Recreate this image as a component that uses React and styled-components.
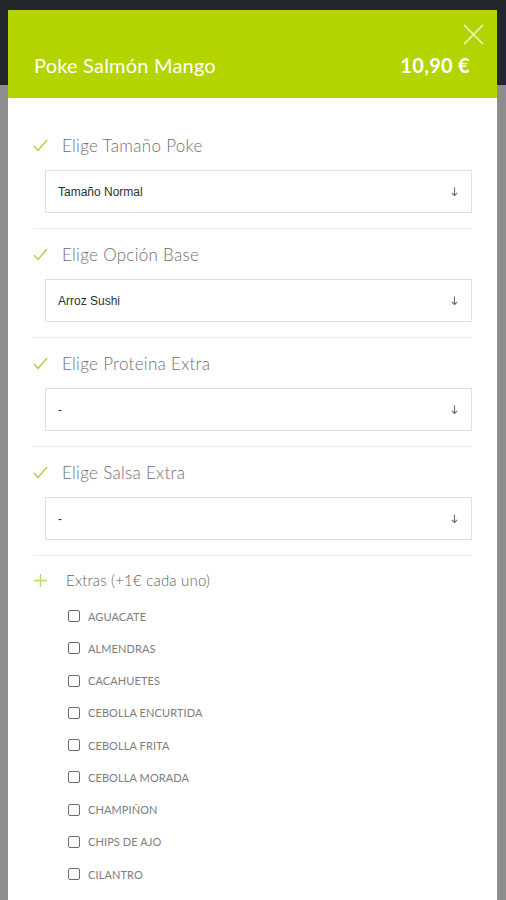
import React from "react";
import styled, { createGlobalStyle } from "styled-components";

const Global = createGlobalStyle`
  html, body {
    margin: 0;
    padding: 0;
  }
  body {
    background: linear-gradient(#23262b 0 85px, #8d8d8d 85px);
    font-family: Lato, "Open Sans", sans-serif;
  }
`;

const steps = [
  { label: "Elige Tamaño Poke", value: "Tamaño Normal" },
  { label: "Elige Opción Base", value: "Arroz Sushi" },
  { label: "Elige Proteina Extra", value: "-" },
  { label: "Elige Salsa Extra", value: "-" },
];

const extras = [
  "Aguacate",
  "Almendras",
  "Cacahuetes",
  "Cebolla encurtida",
  "Cebolla frita",
  "Cebolla morada",
  "Champiñon",
  "Chips de ajo",
  "Cilantro",
  "Edamame",
];

const CheckIcon = () => (
  <svg width="15" height="13" viewBox="0 0 15 13">
    <polyline points="1,7 5,11.5 14,1" fill="none" stroke="#a9cf3b" strokeWidth="1.3" />
  </svg>
);

const PlusIcon = () => (
  <svg width="13" height="13" viewBox="0 0 13 13">
    <path d="M6.5 0 V13 M0 6.5 H13" stroke="#b6d96a" strokeWidth="1.4" />
  </svg>
);

const ArrowDown = () => (
  <svg width="7" height="9" viewBox="0 0 7 9">
    <path d="M3.5 0.5 V8.5 M0.8 5.8 L3.5 8.5 L6.2 5.8" fill="none" stroke="#6a6a6a" strokeWidth="1.1" />
  </svg>
);

const App = () => {
  return (
    <>
      <Global />
      <Modal>
        <Header>
          <Title>Poke Salmón Mango</Title>
          <Price>10,90 €</Price>
          <CloseButton aria-label="Cerrar">
            <svg width="21" height="21" viewBox="0 0 21 21">
              <path d="M1 1 L20 20 M20 1 L1 20" stroke="#eef7c4" strokeWidth="1.5" />
            </svg>
          </CloseButton>
        </Header>

        <Body>
          {steps.map((s) => (
            <Section key={s.label}>
              <LabelRow>
                <IconSlot><CheckIcon /></IconSlot>
                <Label>{s.label}</Label>
              </LabelRow>
              <Select>
                <SelectText>{s.value}</SelectText>
                <ArrowDown />
              </Select>
            </Section>
          ))}

          <ExtrasRow>
            <IconSlot $plus><PlusIcon /></IconSlot>
            <ExtrasLabel>Extras (+1€ cada uno)</ExtrasLabel>
          </ExtrasRow>
          <List>
            {extras.map((e) => (
              <Item key={e}>
                <Box />
                <ItemText>{e}</ItemText>
              </Item>
            ))}
          </List>
        </Body>
      </Modal>
    </>
  );
};

const Modal = styled.div`
  margin: 10px 9px 0 8px;
  background: #fff;
  min-height: 890px;
  overflow: hidden;
`;

const Header = styled.div`
  position: relative;
  height: 88px;
  box-sizing: border-box;
  background: #b3d400;
  display: flex;
  align-items: center;
  justify-content: space-between;
  padding: 22px 27px 0 26px;
  color: #fff;
`;

const Title = styled.div`
  font-size: 20px;
  line-height: 26px;
  font-weight: 400;
  letter-spacing: 0.2px;
`;

const Price = styled.div`
  font-size: 20px;
  line-height: 26px;
  font-weight: 700;
  letter-spacing: 0.3px;
`;

const CloseButton = styled.button`
  position: absolute;
  top: 14px;
  right: 13px;
  padding: 0;
  border: 0;
  background: none;
  width: 21px;
  height: 21px;
  cursor: pointer;
  svg {
    display: block;
  }
`;

const Body = styled.div`
  padding: 22px 25px 0 25px;
`;

const Section = styled.div`
  padding: 13px 0 15px;
  border-bottom: 1px solid #ededed;
`;

const LabelRow = styled.div`
  display: flex;
  align-items: center;
  height: 24px;
`;

const IconSlot = styled.div`
  width: ${(p) => (p.$plus ? "32px" : "29px")};
  padding-left: ${(p) => (p.$plus ? "1px" : "0")};
  display: flex;
  align-items: center;
  svg {
    display: block;
  }
`;

const Label = styled.div`
  font-size: 17px;
  font-weight: 300;
  color: #6f6f6f;
  letter-spacing: 0.3px;
`;

const Select = styled.div`
  margin: 13px 0 0 12px;
  height: 43px;
  box-sizing: border-box;
  border: 1.5px solid #e0e0e0;
  display: flex;
  align-items: center;
  justify-content: space-between;
  padding: 0 13px 0 12px;
`;

const SelectText = styled.div`
  font-family: "Liberation Sans", Arial, sans-serif;
  font-size: 12px;
  color: #1f3535;
`;

const ExtrasRow = styled.div`
  display: flex;
  align-items: center;
  height: 24px;
  margin-top: 12px;
`;

const ExtrasLabel = styled.div`
  font-size: 15px;
  font-weight: 300;
  color: #5f5f5f;
  letter-spacing: 0.2px;
`;

const List = styled.div`
  margin-top: 8px;
  padding-left: 35px;
`;

const Item = styled.div`
  display: flex;
  align-items: center;
  height: 32.25px;
`;

const Box = styled.span`
  width: 10px;
  height: 10px;
  border: 1.5px solid #6c6c6c;
  border-radius: 2px;
  margin-right: 8px;
  flex-shrink: 0;
`;

const ItemText = styled.span`
  font-size: 11px;
  font-weight: 400;
  text-transform: uppercase;
  color: #7d7d7d;
  letter-spacing: 0.1px;
`;

export default App;
